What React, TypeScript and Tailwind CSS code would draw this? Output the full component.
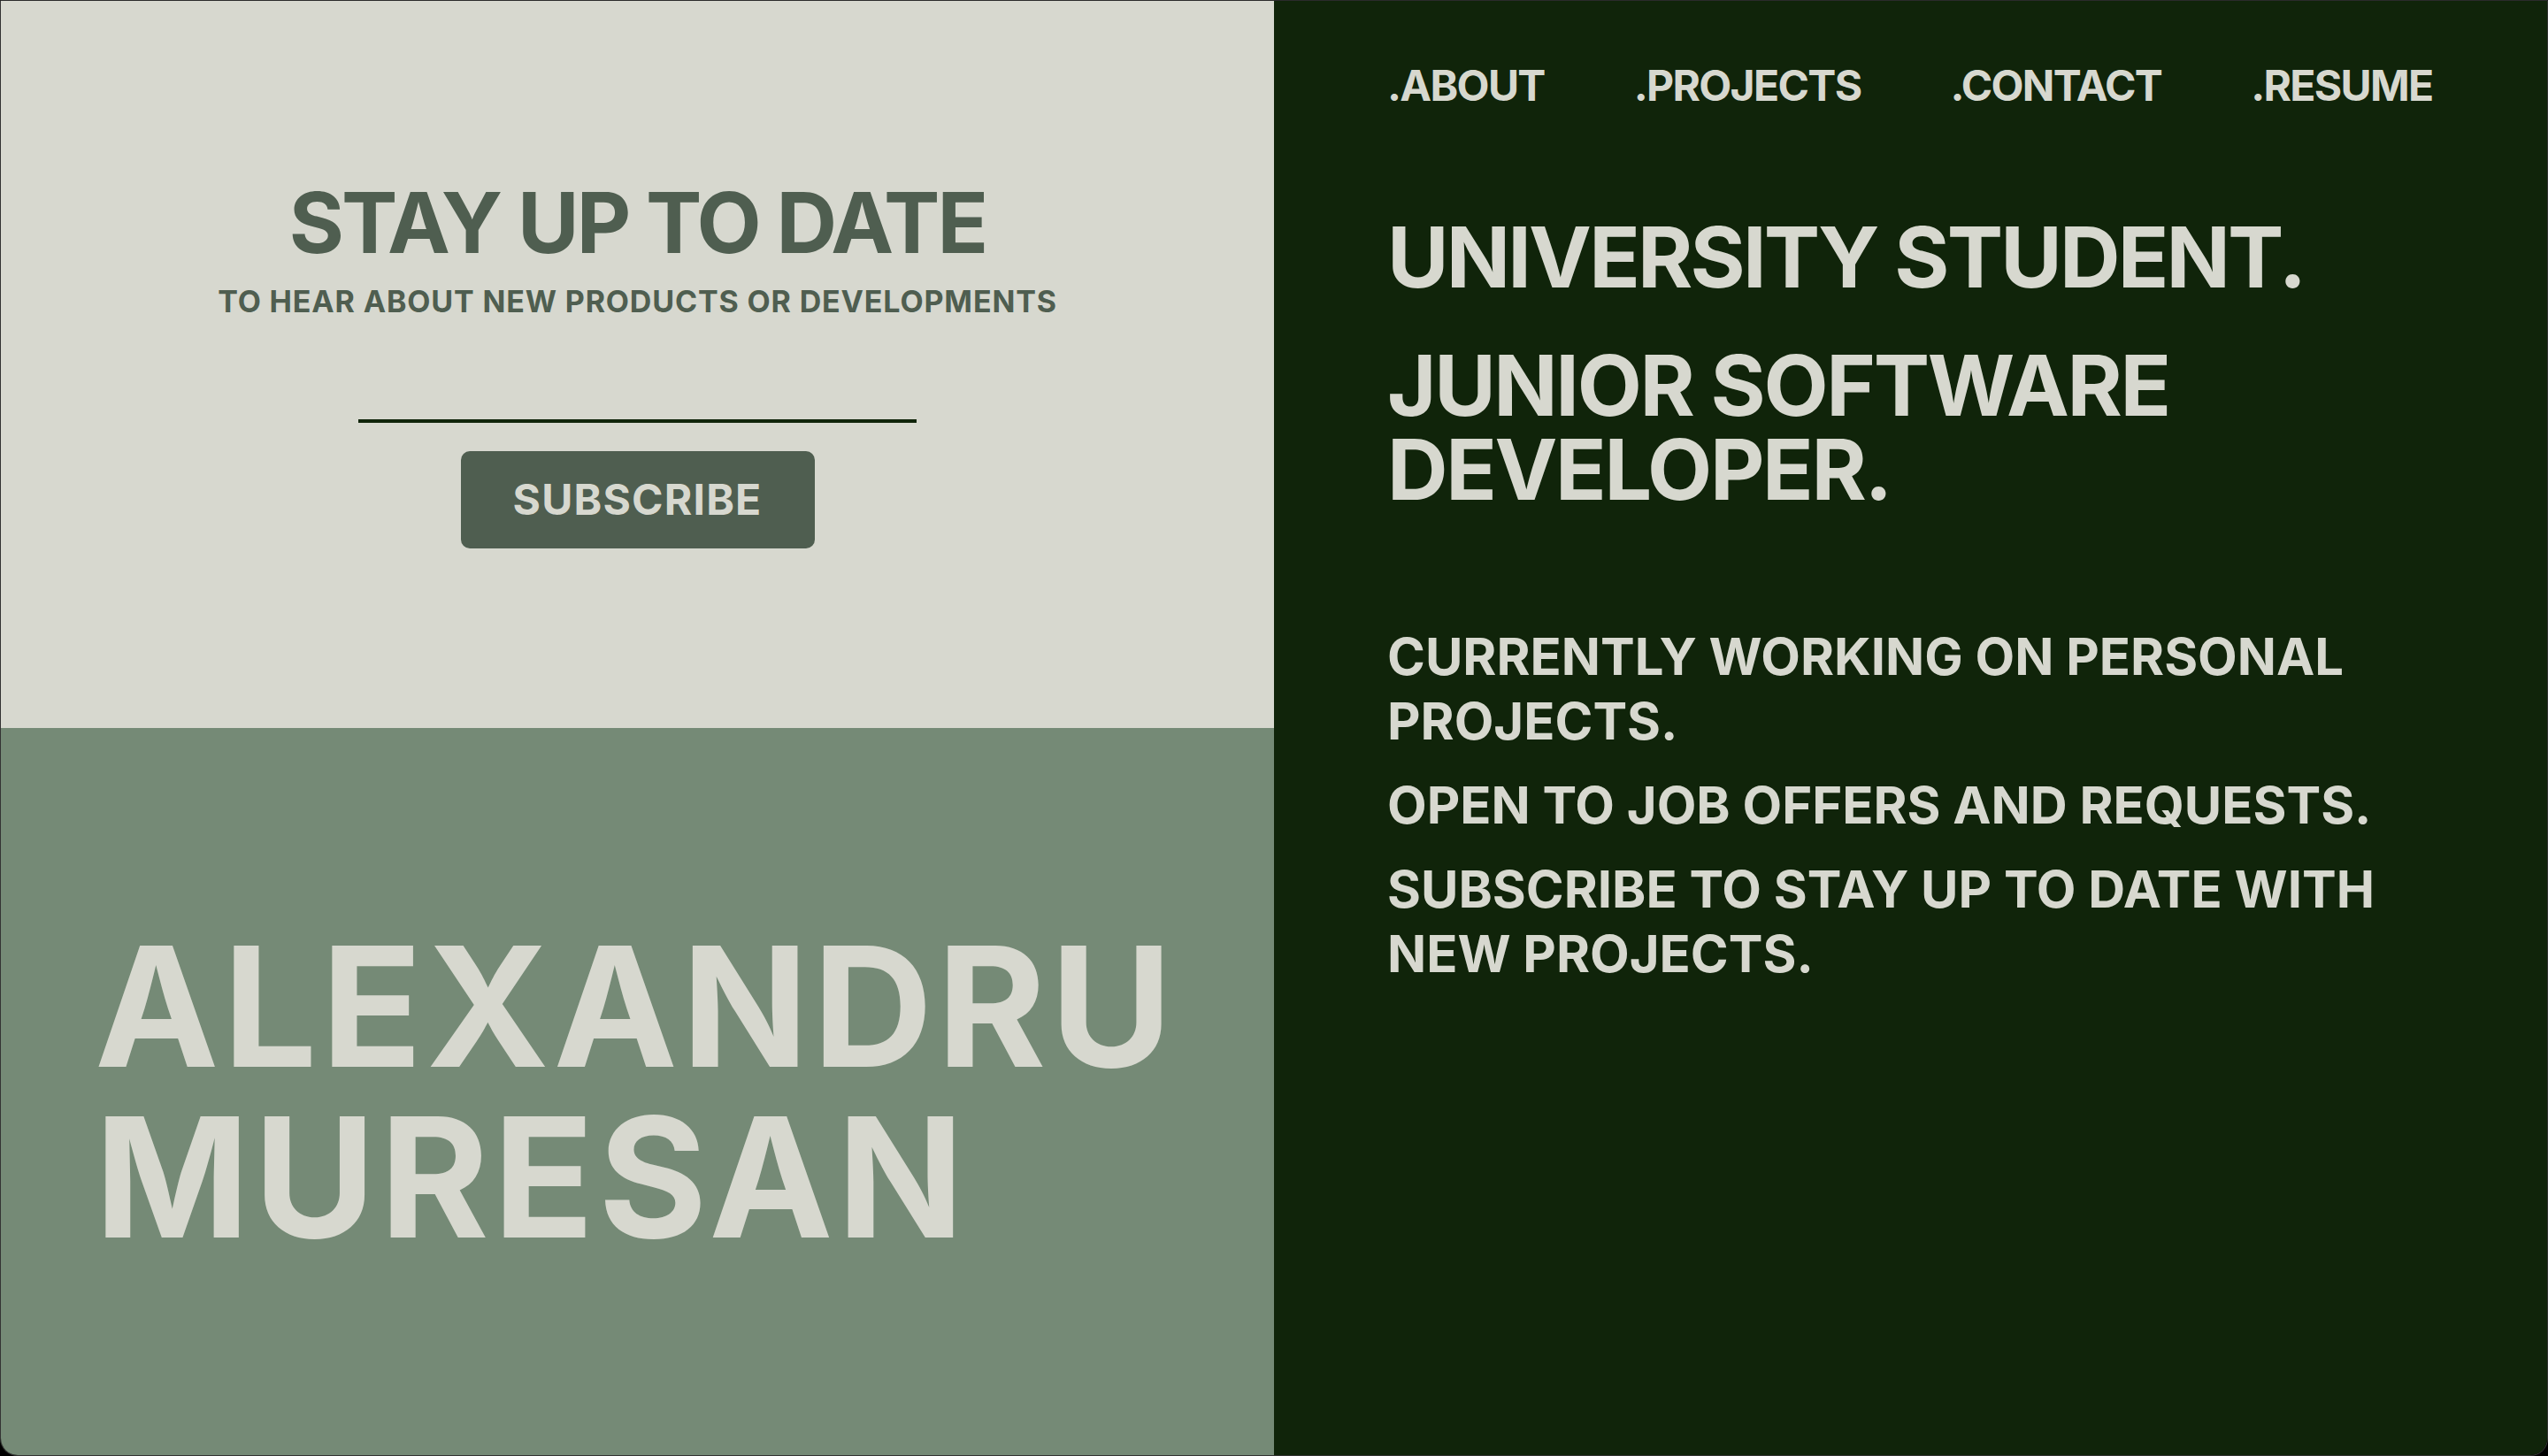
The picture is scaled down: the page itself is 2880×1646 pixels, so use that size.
import React, { useState } from "react";

const navLinks = [".ABOUT", ".PROJECTS", ".CONTACT", ".RESUME"];

const notes = [
  "CURRENTLY WORKING ON PERSONAL PROJECTS.",
  "OPEN TO JOB OFFERS AND REQUESTS.",
  "SUBSCRIBE TO STAY UP TO DATE WITH NEW PROJECTS.",
];

export default function App() {
  const [email, setEmail] = useState("");

  return (
    <div className="h-screen w-full bg-black font-['Inter','Liberation_Sans',sans-serif]">
      <div className="grid h-full grid-cols-2 overflow-hidden rounded-b-[20px] border-x border-b border-t border-white/20 border-t-[#2b2b2b]">
        {/* Left column */}
        <div className="flex flex-col">
          {/* Newsletter */}
          <section className="flex h-[822px] flex-col items-center justify-center bg-[#d7d8cf] text-[#4f5e50]">
            <h2 className="text-[95px] font-bold leading-none tracking-[-0.03em]">STAY UP TO DATE</h2>
            <p className="mt-[25px] text-[34px] font-bold leading-none tracking-[0.025em]">
              TO HEAR ABOUT NEW PRODUCTS OR DEVELOPMENTS
            </p>
            <input
              type="email"
              value={email}
              onChange={(e) => setEmail(e.target.value)}
              className="mt-[56px] h-[64px] w-[631px] border-b-4 border-[#10240a] bg-transparent text-center text-[34px] text-[#10240a] outline-none"
            />
            <button className="mt-[32px] h-[110px] w-[400px] rounded-[10px] bg-[#4f5e50] text-[48px] font-bold tracking-wide text-[#d7d8cf]">
              SUBSCRIBE
            </button>
          </section>

          {/* Name */}
          <section className="flex flex-1 flex-col justify-center bg-[#758a76] px-[106px]">
            <h1 className="text-[188px] font-bold leading-[193px] tracking-[0.025em] text-[#d7d8cf]">
              <span className="block">ALEXANDRU</span>
              <span className="block">MURESAN</span>
            </h1>
          </section>
        </div>

        {/* Right column */}
        <div className="flex flex-col bg-[#10240a] px-[128px] pt-[72px] text-[#d7d8cf]">
          <nav className="flex gap-[101px]">
            {navLinks.map((link) => (
              <a key={link} href="#" className="text-[48px] font-bold leading-none tracking-[-0.035em]">
                {link}
              </a>
            ))}
          </nav>

          <h2 className="mt-[122px] text-[95px] font-bold leading-none tracking-[-0.03em]">UNIVERSITY STUDENT.</h2>
          <h2 className="mt-[50px] text-[95px] font-bold leading-none tracking-[-0.025em]">JUNIOR SOFTWARE DEVELOPER.</h2>

          <div className="mt-[128px] flex flex-col gap-[22px]">
            {notes.map((note) => (
              <p key={note} className="text-[58px] font-bold leading-[73px]">
                {note}
              </p>
            ))}
          </div>
        </div>
      </div>
    </div>
  );
}
